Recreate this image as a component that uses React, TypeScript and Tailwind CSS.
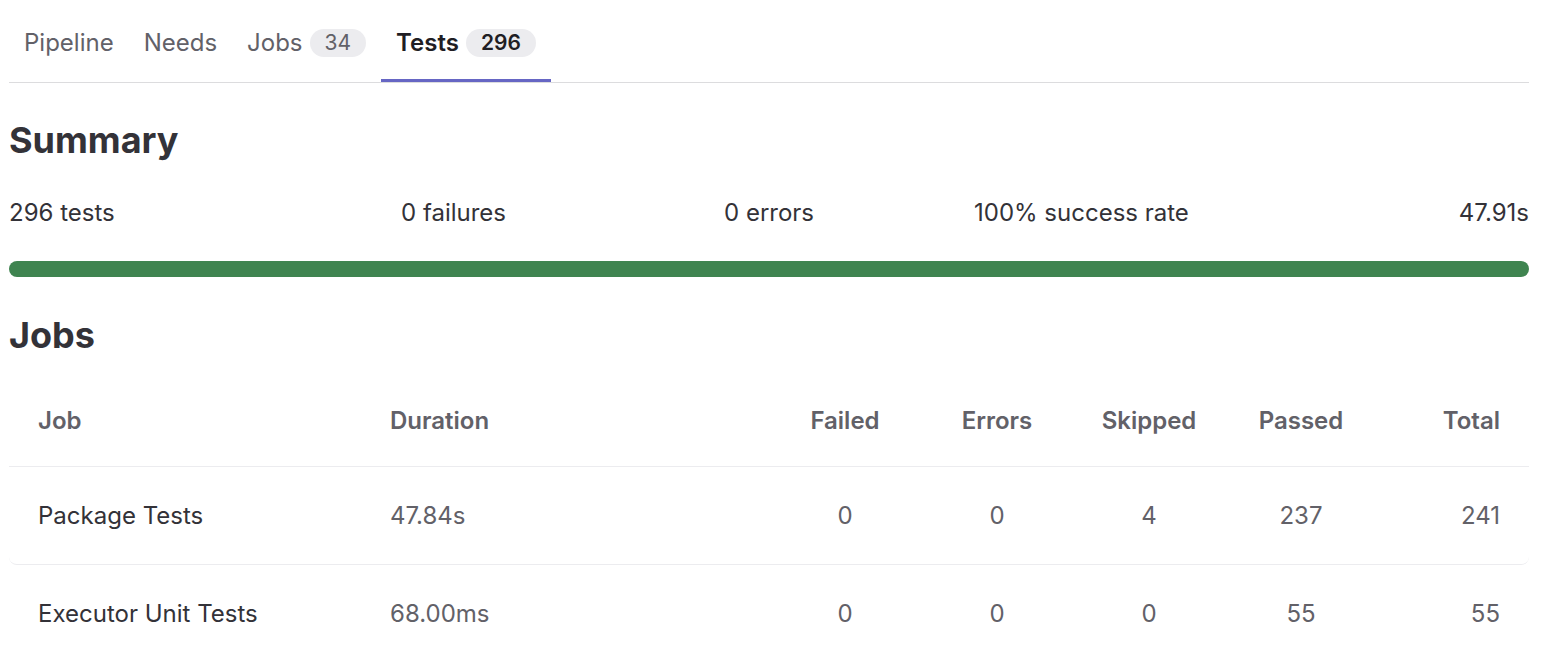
import React from "react"

const tabs = [
  { label: "Pipeline" },
  { label: "Needs" },
  { label: "Jobs", count: 34 },
  { label: "Tests", count: 296, active: true },
]

const stats = [
  { text: "296 tests", className: "w-[392px]" },
  { text: "0 failures", className: "w-[323px]" },
  { text: "0 errors", className: "w-[250px]" },
  { text: "100% success rate", className: "flex-1" },
  { text: "47.91s", className: "text-right" },
]

const jobs = [
  { name: "Package Tests", duration: "47.84s", failed: 0, errors: 0, skipped: 4, passed: 237, total: 241 },
  { name: "Executor Unit Tests", duration: "68.00ms", failed: 0, errors: 0, skipped: 0, passed: 55, total: 55 },
]

const cols = "grid grid-cols-[352px_408px_152px_152px_152px_152px_152px] items-center"

export default function App() {
  return (
    <div className="w-[1548px] h-[656px] overflow-hidden bg-white pl-[9px] pr-[19px] font-['Inter','Noto_Sans',sans-serif] text-[24px] text-[#333238]">
      {/* Tabs */}
      <div className="flex h-[83px] border-b border-[#dcdcde]">
        {tabs.map((tab) => (
          <div
            key={tab.label}
            className={`flex h-[82px] items-center gap-[7px] border-b-[3px] px-[15px] pt-[6px] ${
              tab.active ? "border-[#6666c4] font-semibold text-[#1f1e24]" : "border-transparent text-[#626168]"
            }`}
          >
            <span>{tab.label}</span>
            {tab.count !== undefined && (
              <span
                className={`flex h-[28px] items-center rounded-full bg-[#ececef] px-[15px] text-[21px] ${
                  tab.active ? "font-semibold text-[#1f1e24]" : "font-normal text-[#626168]"
                }`}
              >
                {tab.count}
              </span>
            )}
          </div>
        ))}
      </div>

      {/* Summary */}
      <h2 className="mt-[35px] text-[36px] font-bold leading-[44px] text-[#333238]">Summary</h2>
      <div className="mt-[35px] flex leading-[32px]">
        {stats.map((s) => (
          <div key={s.text} className={s.className}>
            {s.text}
          </div>
        ))}
      </div>
      <div className="mt-[32px] h-[16px] w-full rounded-full bg-[#3f8450]" />

      {/* Jobs */}
      <h2 className="mt-[36px] text-[36px] font-bold leading-[44px] text-[#333238]">Jobs</h2>
      <div className="mt-[18px]">
        <div className={`${cols} h-[92px] border-b border-[#ececef] font-semibold text-[#626168]`}>
          <div className="pl-[29px]">Job</div>
          <div className="pl-[29px]">Duration</div>
          <div className="text-center">Failed</div>
          <div className="text-center">Errors</div>
          <div className="text-center">Skipped</div>
          <div className="text-center">Passed</div>
          <div className="pr-[29px] text-right">Total</div>
        </div>
        {jobs.map((job) => (
          <div key={job.name} className={`${cols} h-[98px] rounded-b-lg border-b border-[#ececef]`}>
            <div className="pl-[29px] text-[#333238]">{job.name}</div>
            <div className="pl-[29px] text-[#626168]">{job.duration}</div>
            <div className="text-center text-[#626168]">{job.failed}</div>
            <div className="text-center text-[#626168]">{job.errors}</div>
            <div className="text-center text-[#626168]">{job.skipped}</div>
            <div className="text-center text-[#626168]">{job.passed}</div>
            <div className="pr-[29px] text-right text-[#626168]">{job.total}</div>
          </div>
        ))}
      </div>
    </div>
  )
}
